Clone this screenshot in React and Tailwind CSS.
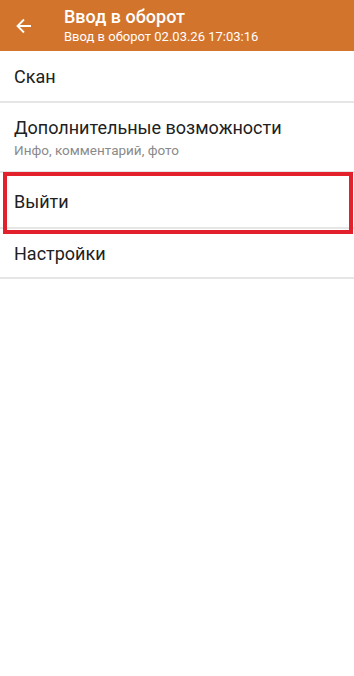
import React from "react";

function Divider() {
  return <div className="h-[2px] bg-[#e6e6e6]" />;
}

export default function App() {
  return (
    <div className="relative w-[354px] h-[676px] bg-white overflow-hidden" style={{ fontFamily: "Roboto, 'Noto Sans', sans-serif" }}>
      <div className="h-[51px] bg-[#d3742c] flex items-center">
        <div className="w-[64px] flex items-center pl-[16px]">
          <svg width="16" height="16" viewBox="0 0 16 16" fill="none" stroke="white" strokeWidth="1.8">
            <path d="M15 8H1.5M8 1.5L1.5 8L8 14.5" />
          </svg>
        </div>
        <div className="flex flex-col text-white">
          <div className="text-[18px] leading-[22px] font-medium">Ввод в оборот</div>
          <div className="text-[13px] leading-[16px] mt-[1px]">Ввод в оборот 02.03.26 17:03:16</div>
        </div>
      </div>
      <div className="h-[50px] flex items-center px-[14px] text-[18px] text-[#212121]">Скан</div>
      <Divider />
      <div className="h-[68px] flex flex-col justify-center px-[14px] pt-[2px]">
        <div className="text-[18px] leading-[22px] text-[#212121]">Дополнительные возможности</div>
        <div className="text-[13.5px] leading-[18px] mt-[2px] text-[#8a8a8a]">Инфо, комментарий, фото</div>
      </div>
      <Divider />
      <div className="h-[54px] flex items-center px-[14px] text-[18px] text-[#212121] pt-[2px]">Выйти</div>
      <Divider />
      <div className="h-[48px] flex items-center px-[14px] text-[18px] text-[#212121]">Настройки</div>
      <Divider />
      <div className="absolute left-[3px] top-[172px] w-[350px] h-[62px] border-[4px] border-[#e3212d]" />
    </div>
  );
}
